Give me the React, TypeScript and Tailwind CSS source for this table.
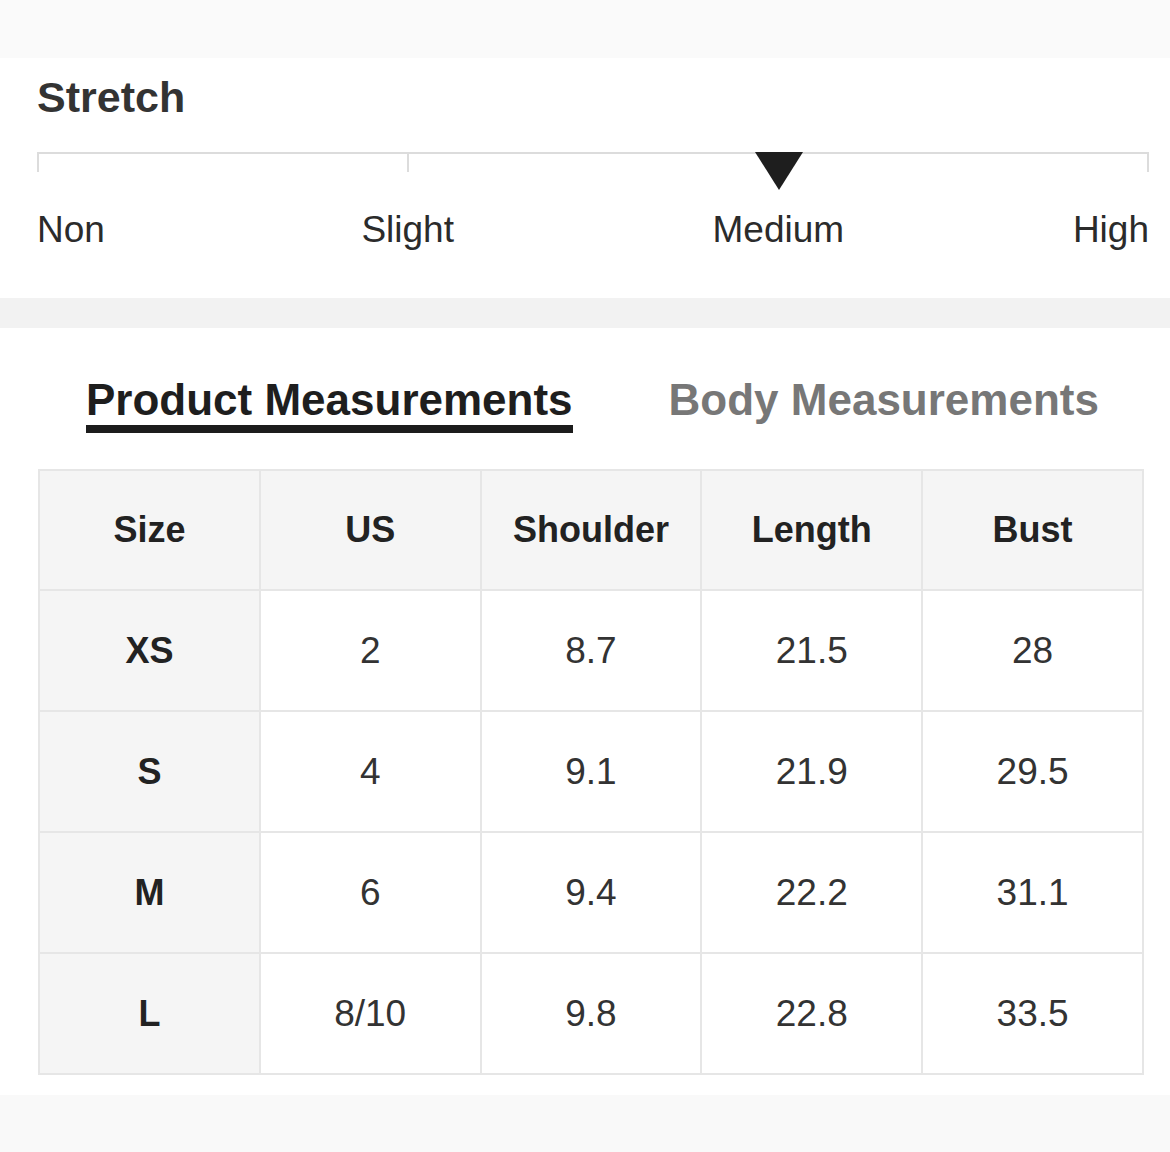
import React from "react";

const headers = ["Size", "US", "Shoulder", "Length", "Bust"];

const rows = [
  ["XS", "2", "8.7", "21.5", "28"],
  ["S", "4", "9.1", "21.9", "29.5"],
  ["M", "6", "9.4", "22.2", "31.1"],
  ["L", "8/10", "9.8", "22.8", "33.5"],
];

function StretchScale() {
  return (
    <section className="bg-white h-[240px] px-[37px] pt-[18px]">
      <h2 className="text-[43px] leading-none font-bold text-[#333]">Stretch</h2>

      {/* scale: 3 segments, marker sits on the 3rd tick */}
      <div className="relative mt-[33px] w-[1112px] flex">
        <div className="flex-1 h-[20px] border-t-2 border-l-2 border-[#dcdcdc]" />
        <div className="flex-1 h-[20px] border-t-2 border-l-2 border-[#dcdcdc]" />
        <div className="flex-1 h-[20px] border-t-2 border-l-2 border-r-2 border-[#dcdcdc]" />
        <svg
          className="absolute top-0 left-[718px]"
          width="48"
          height="38"
          viewBox="0 0 48 38"
        >
          <polygon points="0,0 48,0 24,38" fill="#1e1e1e" />
        </svg>
      </div>

      <div className="grid grid-cols-6 w-[1112px] mt-[39px] text-[37px] leading-none text-[#2b2b2b]">
        <span className="text-left">Non</span>
        <span className="col-span-2 text-center">Slight</span>
        <span className="col-span-2 text-center">Medium</span>
        <span className="text-right">High</span>
      </div>
    </section>
  );
}

function SizeTable() {
  return (
    <table className="ml-[38px] w-[1106px] table-fixed border-collapse">
      <thead>
        <tr className="bg-[#f5f5f5]">
          {headers.map((h) => (
            <th
              key={h}
              className="h-[120px] border-2 border-[#e6e6e6] text-[36px] font-bold text-[#222] text-center"
            >
              {h}
            </th>
          ))}
        </tr>
      </thead>
      <tbody>
        {rows.map((r) => (
          <tr key={r[0]}>
            {r.map((cell, i) => (
              <td
                key={i}
                className={
                  i === 0
                    ? "h-[121px] border-2 border-[#e6e6e6] bg-[#f5f5f5] text-center text-[36px] font-bold text-[#222]"
                    : "h-[121px] border-2 border-[#e6e6e6] bg-white text-center text-[37px] text-[#333]"
                }
              >
                {cell}
              </td>
            ))}
          </tr>
        ))}
      </tbody>
    </table>
  );
}

export default function App() {
  return (
    <div className="w-[1170px] h-[1152px] overflow-hidden bg-[#f9f9f9] font-['Liberation_Sans',Arial,sans-serif]">
      <div className="h-[58px] bg-[#fafafa]" />
      <StretchScale />
      <div className="h-[30px] bg-[#f2f2f2]" />

      <section className="bg-white pt-[50px] pb-[20px]">
        <div className="flex pl-[86px] gap-[96px]">
          <div>
            <div className="text-[44px] leading-none font-bold text-[#1e1e1e]">
              Product Measurements
            </div>
            <div className="mt-[3px] h-[8px] bg-[#1c1c1c]" />
          </div>
          <div className="text-[44px] leading-none font-bold text-[#777]">
            Body Measurements
          </div>
        </div>

        <div className="mt-[36px]">
          <SizeTable />
        </div>
      </section>
    </div>
  );
}
